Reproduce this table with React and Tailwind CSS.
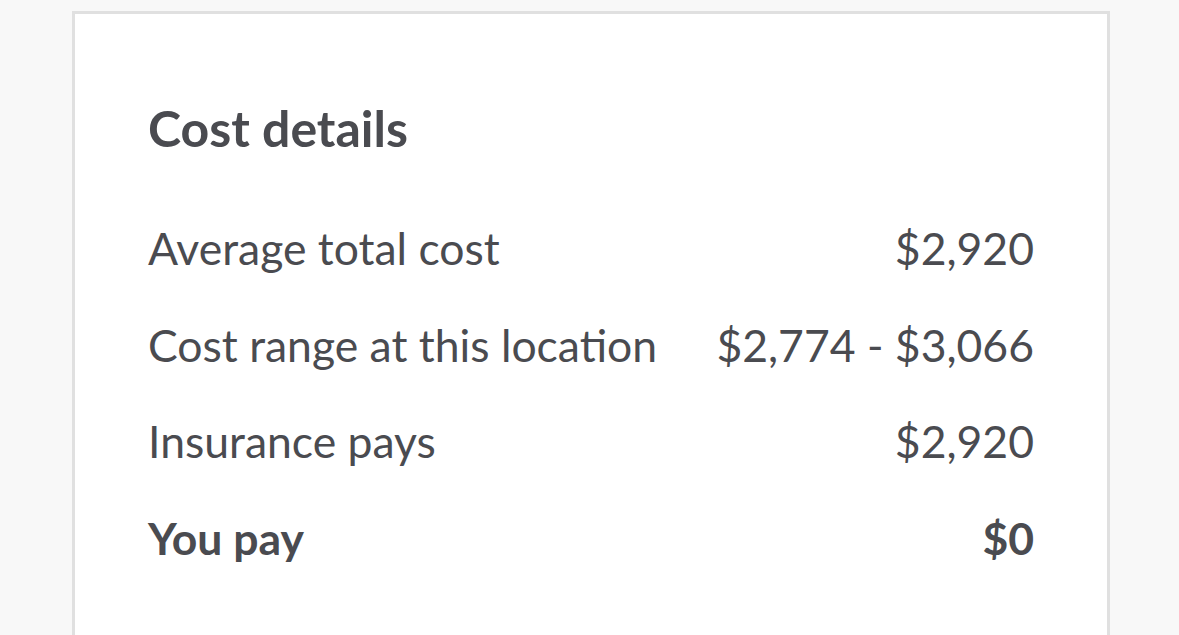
export default function App() {
  const rows = [
    ["Average total cost", "$2,920"],
    ["Cost range at this location", "$2,774 - $3,066"],
    ["Insurance pays", "$2,920"],
  ];
  return (
    <div className="min-h-[635px] h-[635px] overflow-hidden bg-[#f8f8f8] pt-[11px] pl-[72px]" style={{ fontFamily: "Lato, 'Noto Sans', sans-serif" }}>
      <div className="w-[1038px] h-[700px] bg-white border-[3px] border-[#e0e0e0] px-[73px] pt-[79px] text-[#4a4b50]">
        <h2 className="text-[50px] font-bold leading-[70px]">Cost details</h2>
        <div className="mt-[37px] flex flex-col">
          {rows.map(([l, v]) => (
            <div key={l} className="flex justify-between text-[44.5px] leading-[96.7px]">
              <span>{l}</span>
              <span>{v}</span>
            </div>
          ))}
          <div className="flex justify-between text-[44.5px] leading-[96.7px] font-bold">
            <span>You pay</span>
            <span>$0</span>
          </div>
        </div>
      </div>
    </div>
  );
}
